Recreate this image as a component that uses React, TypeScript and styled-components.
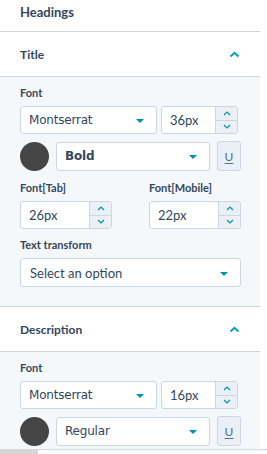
import React from "react";
import styled, { createGlobalStyle } from "styled-components";

const Global = createGlobalStyle`
  html, body { margin: 0; padding: 0; background: #ffffff; }
  body { font-family: Lato, "Noto Sans", sans-serif; color: #33475b; }
  * { box-sizing: border-box; }
`;

const Panel = styled.div`
  width: 260px;
  background: #ffffff;
`;

const TopTitle = styled.div`
  height: 32px;
  padding: 0 0 8px 20px;
  display: flex;
  align-items: center;
  font-size: 13px;
  font-weight: 700;
  border-bottom: 1px solid #cbd6e2;
`;

const SectionHeader = styled.div`
  height: 45px;
  padding: 0 20px 0 20px;
  display: flex;
  align-items: center;
  justify-content: space-between;
  font-size: 12px;
  font-weight: 700;
  background: #ffffff;
  border-bottom: 1px solid #cbd6e2;
`;

const SectionBody = styled.div<{ $last?: boolean }>`
  background: #f5f8fa;
  padding: 9px 19px 19px 20px;
  border-bottom: ${(p) => (p.$last ? "none" : "1px solid #cbd6e2")};
  display: flex;
  flex-direction: column;
`;

const Label = styled.div<{ $top?: number }>`
  font-size: 11px;
  font-weight: 700;
  line-height: 14px;
  margin-top: ${(p) => p.$top ?? 0}px;
  margin-bottom: 6px;
  color: #33475b;
`;

const Row = styled.div<{ $gap: number; $top?: number }>`
  display: flex;
  align-items: center;
  gap: ${(p) => p.$gap}px;
  margin-top: ${(p) => p.$top ?? 0}px;
`;

const Select = styled.div<{ $w: number; $h?: number }>`
  width: ${(p) => p.$w}px;
  height: ${(p) => p.$h ?? 28}px;
  background: #ffffff;
  border: 1px solid #cbd6e2;
  border-radius: 3px;
  display: flex;
  align-items: center;
  justify-content: space-between;
  padding: 0 12px 0 8px;
`;

const FontValue = styled.span<{ $bold?: boolean }>`
  font-family: "DejaVu Sans", sans-serif;
  font-size: 12px;
  font-weight: ${(p) => (p.$bold ? 700 : 400)};
  color: #33475b;
  letter-spacing: -0.2px;
`;

const Placeholder = styled.span`
  font-size: 13px;
  color: #33475b;
  padding-left: 1px;
`;

const Caret = styled.span`
  width: 0;
  height: 0;
  border-left: 4px solid transparent;
  border-right: 4px solid transparent;
  border-top: 4px solid #0091ae;
  margin-top: 2px;
`;

const NumberBox = styled.div<{ $w: number }>`
  width: ${(p) => p.$w}px;
  height: 28px;
  display: flex;
  background: #ffffff;
  border: 1px solid #cbd6e2;
  border-radius: 3px;
  overflow: hidden;
`;

const NumberValue = styled.div`
  flex: 1;
  display: flex;
  align-items: center;
  padding-left: 8px;
  font-size: 13px;
  color: #33475b;
`;

const Stepper = styled.div`
  width: 22px;
  display: flex;
  flex-direction: column;
  border-left: 1px solid #cbd6e2;
  background: #eaf0f6;
`;

const StepBtn = styled.div<{ $bottom?: boolean }>`
  flex: 1;
  display: flex;
  align-items: center;
  justify-content: center;
  border-top: ${(p) => (p.$bottom ? "1px solid #cbd6e2" : "none")};
`;

const Swatch = styled.div`
  width: 29px;
  height: 29px;
  border-radius: 50%;
  background: #454545;
  flex: none;
`;

const UButton = styled.div`
  width: 24px;
  height: 30px;
  background: #eaf0f6;
  border: 1px solid #cbd6e2;
  border-radius: 3px;
  display: flex;
  align-items: center;
  justify-content: center;
  font-size: 12px;
  color: #516f90;
  text-decoration: underline;
  text-underline-offset: 2px;
`;

const TwoCol = styled.div`
  display: grid;
  grid-template-columns: 129px 1fr;
`;

const Col = styled.div`
  display: flex;
  flex-direction: column;
`;

const Footer = styled.div`
  position: fixed;
  left: 0;
  right: 0;
  bottom: 0;
  height: 5px;
  display: flex;
`;

const FooterLeft = styled.div`
  width: 38px;
  background: #d6d6d6;
`;

const FooterRight = styled.div`
  flex: 1;
  background: #ffffff;
  border-top: 1px solid #cbd6e2;
`;

const ChevronUp = () => (
  <svg width="11" height="7" viewBox="0 0 11 7">
    <path d="M1.5 5.5 L5.5 1.8 L9.5 5.5" fill="none" stroke="#00a4bd" strokeWidth="2" />
  </svg>
);

const SmallChev = ({ up }: { up?: boolean }) => (
  <svg width="8" height="5" viewBox="0 0 8 5">
    <path
      d={up ? "M1 4 L4 1 L7 4" : "M1 1 L4 4 L7 1"}
      fill="none"
      stroke="#0091ae"
      strokeWidth="1.2"
    />
  </svg>
);

const NumInput = ({ w, value }: { w: number; value: string }) => (
  <NumberBox $w={w}>
    <NumberValue>{value}</NumberValue>
    <Stepper>
      <StepBtn>
        <SmallChev up />
      </StepBtn>
      <StepBtn $bottom>
        <SmallChev />
      </StepBtn>
    </Stepper>
  </NumberBox>
);

const FontRows = ({ size, weight, bold }: { size: string; weight: string; bold?: boolean }) => (
  <>
    <Label>Font</Label>
    <Row $gap={4}>
      <Select $w={137}>
        <FontValue>Montserrat</FontValue>
        <Caret />
      </Select>
      <NumInput w={77} value={size} />
    </Row>
    <Row $gap={7} $top={7}>
      <Swatch />
      <Select $w={154} $h={29}>
        <FontValue $bold={bold}>{weight}</FontValue>
        <Caret />
      </Select>
      <UButton>U</UButton>
    </Row>
  </>
);

export default function App() {
  return (
    <>
      <Global />
      <Panel>
        <TopTitle>Headings</TopTitle>
        <SectionHeader>
          <span>Title</span>
          <ChevronUp />
        </SectionHeader>
        <SectionBody>
          <FontRows size="36px" weight="Bold" bold />
          <TwoCol>
            <Col>
              <Label $top={10}>Font[Tab]</Label>
              <NumInput w={92} value="26px" />
            </Col>
            <Col>
              <Label $top={10}>Font[Mobile]</Label>
              <NumInput w={92} value="22px" />
            </Col>
          </TwoCol>
          <Label $top={9}>Text transform</Label>
          <Select $w={221} $h={29}>
            <Placeholder>Select an option</Placeholder>
            <Caret />
          </Select>
        </SectionBody>
        <SectionHeader>
          <span>Description</span>
          <ChevronUp />
        </SectionHeader>
        <SectionBody $last>
          <FontRows size="16px" weight="Regular" />
        </SectionBody>
      </Panel>
      <Footer>
        <FooterLeft />
        <FooterRight />
      </Footer>
    </>
  );
}
